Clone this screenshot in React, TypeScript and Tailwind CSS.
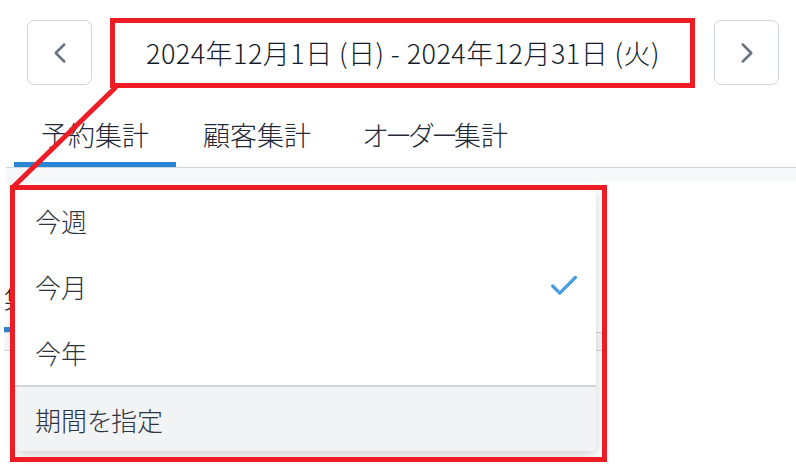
import React from 'react';
import { ChevronLeft, ChevronRight, Check } from 'lucide-react';

const periods = [
  { label: '今週', selected: false },
  { label: '今月', selected: true },
  { label: '今年', selected: false },
];

const App = () => {
  return (
    <div
      className="relative w-[796px] h-[466px] overflow-hidden bg-white font-light"
      style={{ fontFamily: '"Noto Sans CJK JP", "Noto Sans", sans-serif' }}
    >
      {/* period navigation */}
      <div className="flex items-center pt-[20px] pl-[27px] pr-[17px]">
        <button className="w-[65px] h-[65px] shrink-0 flex items-center justify-center rounded-[7px] border border-gray-300 text-gray-500">
          <ChevronLeft size={34} strokeWidth={1.8} />
        </button>
        <div className="flex-1 text-center text-[27px] leading-none tracking-[0.45px] text-[#141b2b]">
          2024年12月1日 (日) - 2024年12月31日 (火)
        </div>
        <button className="w-[65px] h-[65px] shrink-0 flex items-center justify-center rounded-[7px] border border-gray-300 text-gray-500">
          <ChevronRight size={34} strokeWidth={1.8} />
        </button>
      </div>

      {/* tabs */}
      <div className="ml-[6px] mt-[19px] flex pl-[8px] border-b border-gray-300 text-[27px] text-[#1f2937]">
        <div className="h-[63px] px-[27px] flex items-center border-b-[5px] border-[#2a86d4] pt-[5px]">予約集計</div>
        <div className="h-[63px] px-[27px] flex items-center">顧客集計</div>
        <div className="h-[63px] pl-[24px] pr-[27px] flex items-center">
          <span className="tracking-[-4px]">オーダー</span>集計
        </div>
      </div>
      <div className="ml-[6px] h-[14px] bg-[#f7f8fa]" />

      {/* content partly hidden behind the menu */}
      <div className="pl-[4px]">
        <div className="mt-[83px] flex">
          <div className="h-[67px] w-[160px] flex items-center text-[27px] text-[#1f2937] border-b-[5px] border-[#2a86d4] pt-[5px]">
            集計
          </div>
        </div>
        <div className="w-[600px] h-[19px] bg-[#f7f8fa] border-y border-gray-300" />
        <div className="mt-[30px] text-[27px] leading-none text-[#1f2937]">ヒ上</div>
      </div>

      {/* period menu */}
      <div className="absolute left-[15px] top-[187px] w-[581px] bg-white rounded-[6px] overflow-hidden shadow-[0_4px_12px_rgba(0,0,0,0.18)] text-[26px] text-[#2d3441]">
        {periods.map((p) => (
          <div key={p.label} className="h-[66px] flex items-center justify-between pl-[20px] pr-[15px]">
            <span>{p.label}</span>
            {p.selected && <Check size={34} strokeWidth={2.4} className="text-[#4a9fe0]" />}
          </div>
        ))}
        <div className="h-[66px] flex items-center pl-[20px] bg-[#f2f3f5] border-t-2 border-gray-300">
          期間<span className="tracking-[-2px]">を</span>指定
        </div>
      </div>

      {/* annotation marks */}
      <svg className="absolute inset-0 pointer-events-none" width="796" height="466" viewBox="0 0 796 466">
        <rect x="112.5" y="20.5" width="580" height="65" fill="none" stroke="#ee1c25" strokeWidth="5" />
        <rect x="12.5" y="187.5" width="592" height="272" fill="none" stroke="#ee1c25" strokeWidth="5" />
        <line x1="116" y1="87" x2="12" y2="188" stroke="#ee1c25" strokeWidth="5" />
      </svg>
    </div>
  );
};

export default App;
